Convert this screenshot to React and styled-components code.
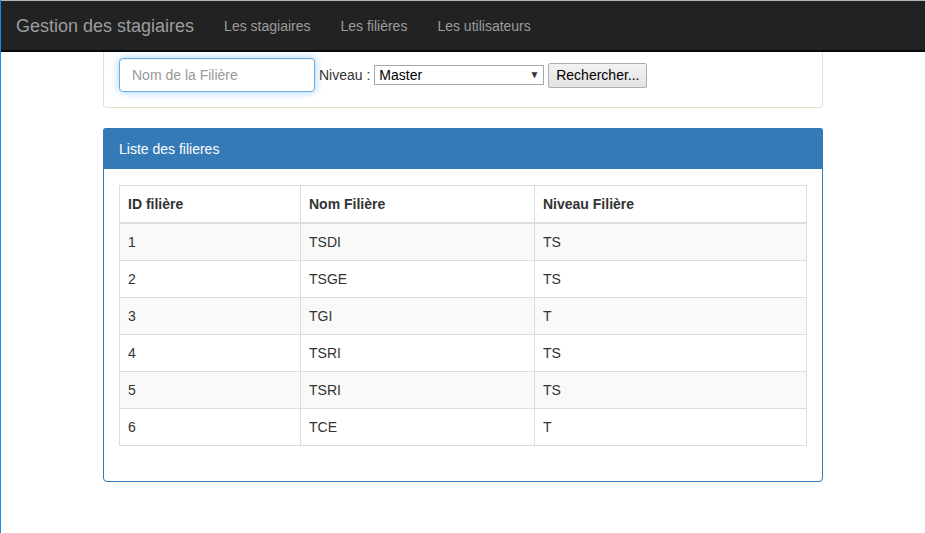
import React from "react";
import styled, { createGlobalStyle } from "styled-components";

const GlobalStyle = createGlobalStyle`
  html, body { margin: 0; padding: 0; background: #fff; }
  body {
    font-family: "Liberation Sans", Arial, Helvetica, sans-serif;
    font-size: 14px;
    line-height: 20px;
    color: #333;
  }
  * { box-sizing: border-box; }
`;

const Page = styled.div`
  min-height: 100vh;
  border-left: 1px solid #1c8ae2;
`;

const Navbar = styled.nav`
  display: flex;
  align-items: center;
  height: 52px;
  background: #222;
  border-top: 1px solid #b5b5b5;
  border-bottom: 2px solid #080808;
`;

const Brand = styled.a`
  font-size: 18px;
  line-height: 20px;
  color: #9d9d9d;
  padding: 0 15px;
  text-decoration: none;
`;

const NavLink = styled.a`
  color: #9d9d9d;
  font-size: 14px;
  line-height: 20px;
  padding: 1px 15px 0;
  text-decoration: none;
`;

const Container = styled.main`
  width: 720px;
  margin: 0 auto;
`;

const Panel = styled.section`
  border: 1px solid ${(p) => p.$border};
  border-radius: 4px;
  margin-bottom: 20px;
  background: #fff;
  ${(p) => p.$cut && `border-top: none; border-top-left-radius: 0; border-top-right-radius: 0;`}
`;

const PanelHeading = styled.div`
  background: #337ab7;
  color: #fff;
  padding: 10px 15px;
  line-height: 20px;
  border-radius: 3px 3px 0 0;
  margin: -1px -1px 0;
  border: 1px solid #337ab7;
  border-bottom: none;
`;

const PanelBody = styled.div`
  padding: ${(p) => (p.$top ?? 15)}px 15px 15px;
`;

const SearchForm = styled.form`
  display: flex;
  align-items: center;
`;

const TextInput = styled.input`
  width: 196px;
  height: 34px;
  padding: 6px 12px;
  font-family: inherit;
  font-size: 14px;
  color: #555;
  border: 1px solid #66afe9;
  border-radius: 4px;
  box-shadow: inset 0 1px 1px rgba(0,0,0,.075), 0 0 8px rgba(102,175,233,.6);
  outline: none;
  &::placeholder { color: #999; }
`;

const Label = styled.label`
  margin-left: 4px;
  margin-right: 4px;
  color: #333;
`;

const SelectWrap = styled.div`
  position: relative;
  width: 170px;
  height: 20px;
`;

const Select = styled.select`
  appearance: none;
  width: 100%;
  height: 20px;
  padding: 0 4px;
  font-family: inherit;
  font-size: 14px;
  line-height: 18px;
  color: #000;
  background: #fff;
  border: 1px solid #a6a6a6;
  border-radius: 0;
  outline: none;
`;

const Arrow = styled.span`
  position: absolute;
  right: 5px;
  top: 3px;
  font-size: 10px;
  line-height: 14px;
  color: #333;
  pointer-events: none;
`;

const Button = styled.button`
  margin-left: 4px;
  height: 25px;
  width: 99px;
  padding: 0 6px;
  font-family: inherit;
  font-size: 14px;
  color: #000;
  background: linear-gradient(#f2f2f2, #e3e3e3);
  border: 1px solid #adadad;
  border-radius: 2px;
`;

const Table = styled.table`
  width: 100%;
  border-collapse: collapse;
  border: 1px solid #ddd;
  margin-bottom: 20px;
`;

const Th = styled.th`
  text-align: left;
  font-weight: bold;
  padding: 8px;
  line-height: 20px;
  border: 1px solid #ddd;
  border-bottom: 2px solid #ddd;
  color: #333;
  width: ${(p) => p.$w || "auto"};
`;

const Row = styled.tr`
  background: ${(p) => (p.$odd ? "#f9f9f9" : "#fff")};
`;

const Td = styled.td`
  padding: 8px;
  line-height: 20px;
  border: 1px solid #ddd;
  color: #333;
`;

const rows = [
  ["1", "TSDI", "TS"],
  ["2", "TSGE", "TS"],
  ["3", "TGI", "T"],
  ["4", "TSRI", "TS"],
  ["5", "TSRI", "TS"],
  ["6", "TCE", "T"],
];

export default function App() {
  return (
    <>
      <GlobalStyle />
      <Page>
        <Navbar>
          <Brand href="#">Gestion des stagiaires</Brand>
          <NavLink href="#">Les stagiaires</NavLink>
          <NavLink href="#">Les filières</NavLink>
          <NavLink href="#">Les utilisateurs</NavLink>
        </Navbar>
        <Container>
          <Panel $border="#d6e9c6" $cut>
            <PanelBody $top={6}>
              <SearchForm onSubmit={(e) => e.preventDefault()}>
                <TextInput placeholder="Nom de la Filière" />
                <Label>Niveau :</Label>
                <SelectWrap>
                  <Select defaultValue="Master">
                    <option>Master</option>
                    <option>Licence</option>
                    <option>TS</option>
                    <option>T</option>
                  </Select>
                  <Arrow>▼</Arrow>
                </SelectWrap>
                <Button type="submit">Rechercher...</Button>
              </SearchForm>
            </PanelBody>
          </Panel>
          <Panel $border="#337ab7">
            <PanelHeading>Liste des filieres</PanelHeading>
            <PanelBody $top={16}>
              <Table>
                <thead>
                  <tr>
                    <Th $w="181px">ID filière</Th>
                    <Th $w="234px">Nom Filière</Th>
                    <Th>Niveau Filière</Th>
                  </tr>
                </thead>
                <tbody>
                  {rows.map((r, i) => (
                    <Row key={i} $odd={i % 2 === 0}>
                      <Td>{r[0]}</Td>
                      <Td>{r[1]}</Td>
                      <Td>{r[2]}</Td>
                    </Row>
                  ))}
                </tbody>
              </Table>
            </PanelBody>
          </Panel>
        </Container>
      </Page>
    </>
  );
}
